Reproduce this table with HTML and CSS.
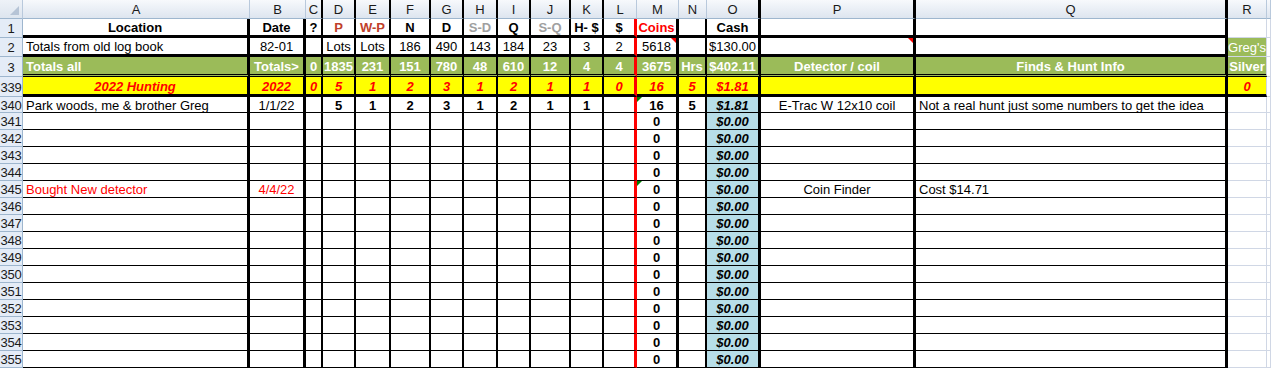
FILE: index.html
```html
<!DOCTYPE html>
<html>
<head>
<meta charset="utf-8">
<title>Hunt log</title>
<link rel="stylesheet" href="styles.css">
</head>
<body>
<div class="sheet">
  <div class="row colhead"><div class="corner"></div><div>A</div><div>B</div><div>C</div><div>D</div><div>E</div><div>F</div><div>G</div><div>H</div><div>I</div><div>J</div><div>K</div><div>L</div><div>M</div><div>N</div><div>O</div><div>P</div><div>Q</div><div>R</div><div></div></div>

  <div class="row r1"><div class="rh">1</div><div class="b">Location</div><div class="b">Date</div><div class="b">?</div><div class="b brown">P</div><div class="b brown">W-P</div><div class="b">N</div><div class="b">D</div><div class="b grey">S-D</div><div class="b">Q</div><div class="b grey">S-Q</div><div class="b">H- $</div><div class="b">$</div><div class="b red">Coins</div><div></div><div class="b">Cash</div><div></div><div></div><div class="rtop"></div><div></div></div>

  <div class="row r2"><div class="rh">2</div><div class="l">Totals from old log book</div><div>82-01</div><div></div><div>Lots</div><div>Lots</div><div>186</div><div>490</div><div>143</div><div>184</div><div>23</div><div>3</div><div>2</div><div class="cm">5618</div><div></div><div>$130.00</div><div class="cm"></div><div></div><div class="rgreen">Greg's</div><div></div></div>

  <div class="row r3"><div class="rh">3</div><div class="l">Totals all</div><div>Totals&gt;</div><div>0</div><div>1835</div><div>231</div><div>151</div><div>780</div><div class="gray">48</div><div>610</div><div class="gray">12</div><div class="gray">4</div><div>4</div><div>3675</div><div>Hrs</div><div>$402.11</div><div>Detector / coil</div><div>Finds &amp; Hunt Info</div><div>Silver</div><div></div></div>

  <div class="row r339"><div class="rh">339</div><div>2022 Hunting</div><div>2022</div><div>0</div><div>5</div><div>1</div><div>2</div><div>3</div><div class="gray">1</div><div>2</div><div class="gray">1</div><div class="gray">1</div><div>0</div><div>16</div><div>5</div><div>$1.81</div><div></div><div></div><div class="rbox">0</div><div></div></div>

  <div class="row r340"><div class="rh">340</div><div class="l">Park woods, me &amp; brother Greg</div><div>1/1/22</div><div></div><div class="b">5</div><div class="b">1</div><div class="b">2</div><div class="b">3</div><div class="b">1</div><div class="b">2</div><div class="b">1</div><div class="b">1</div><div></div><div class="b gm">16</div><div class="b">5</div><div class="b i blue">$1.81</div><div>E-Trac W 12x10 coil</div><div class="l">Not a real hunt just some numbers to get the idea</div><div></div><div></div></div>

  <div class="row"><div class="rh">341</div><div></div><div></div><div></div><div></div><div></div><div></div><div></div><div></div><div></div><div></div><div></div><div></div><div class="b">0</div><div></div><div class="b i blue">$0.00</div><div></div><div></div><div></div><div></div></div>
  <div class="row"><div class="rh">342</div><div></div><div></div><div></div><div></div><div></div><div></div><div></div><div></div><div></div><div></div><div></div><div></div><div class="b">0</div><div></div><div class="b i blue">$0.00</div><div></div><div></div><div></div><div></div></div>
  <div class="row"><div class="rh">343</div><div></div><div></div><div></div><div></div><div></div><div></div><div></div><div></div><div></div><div></div><div></div><div></div><div class="b">0</div><div></div><div class="b i blue">$0.00</div><div></div><div></div><div></div><div></div></div>
  <div class="row"><div class="rh">344</div><div></div><div></div><div></div><div></div><div></div><div></div><div></div><div></div><div></div><div></div><div></div><div></div><div class="b">0</div><div></div><div class="b i blue">$0.00</div><div></div><div></div><div></div><div></div></div>
  <div class="row"><div class="rh">345</div><div class="l red">Bought New detector</div><div class="red">4/4/22</div><div></div><div></div><div></div><div></div><div></div><div></div><div></div><div></div><div></div><div></div><div class="b gm">0</div><div></div><div class="b i blue">$0.00</div><div>Coin Finder</div><div class="l">Cost $14.71</div><div></div><div></div></div>
  <div class="row"><div class="rh">346</div><div></div><div></div><div></div><div></div><div></div><div></div><div></div><div></div><div></div><div></div><div></div><div></div><div class="b">0</div><div></div><div class="b i blue">$0.00</div><div></div><div></div><div></div><div></div></div>
  <div class="row"><div class="rh">347</div><div></div><div></div><div></div><div></div><div></div><div></div><div></div><div></div><div></div><div></div><div></div><div></div><div class="b">0</div><div></div><div class="b i blue">$0.00</div><div></div><div></div><div></div><div></div></div>
  <div class="row"><div class="rh">348</div><div></div><div></div><div></div><div></div><div></div><div></div><div></div><div></div><div></div><div></div><div></div><div></div><div class="b">0</div><div></div><div class="b i blue">$0.00</div><div></div><div></div><div></div><div></div></div>
  <div class="row"><div class="rh">349</div><div></div><div></div><div></div><div></div><div></div><div></div><div></div><div></div><div></div><div></div><div></div><div></div><div class="b">0</div><div></div><div class="b i blue">$0.00</div><div></div><div></div><div></div><div></div></div>
  <div class="row"><div class="rh">350</div><div></div><div></div><div></div><div></div><div></div><div></div><div></div><div></div><div></div><div></div><div></div><div></div><div class="b">0</div><div></div><div class="b i blue">$0.00</div><div></div><div></div><div></div><div></div></div>
  <div class="row"><div class="rh">351</div><div></div><div></div><div></div><div></div><div></div><div></div><div></div><div></div><div></div><div></div><div></div><div></div><div class="b">0</div><div></div><div class="b i blue">$0.00</div><div></div><div></div><div></div><div></div></div>
  <div class="row"><div class="rh">352</div><div></div><div></div><div></div><div></div><div></div><div></div><div></div><div></div><div></div><div></div><div></div><div></div><div class="b">0</div><div></div><div class="b i blue">$0.00</div><div></div><div></div><div></div><div></div></div>
  <div class="row"><div class="rh">353</div><div></div><div></div><div></div><div></div><div></div><div></div><div></div><div></div><div></div><div></div><div></div><div></div><div class="b">0</div><div></div><div class="b i blue">$0.00</div><div></div><div></div><div></div><div></div></div>
  <div class="row"><div class="rh">354</div><div></div><div></div><div></div><div></div><div></div><div></div><div></div><div></div><div></div><div></div><div></div><div></div><div class="b">0</div><div></div><div class="b i blue">$0.00</div><div></div><div></div><div></div><div></div></div>
  <div class="row"><div class="rh">355</div><div></div><div></div><div></div><div></div><div></div><div></div><div></div><div></div><div></div><div></div><div></div><div></div><div class="b">0</div><div></div><div class="b i blue">$0.00</div><div></div><div></div><div></div><div></div></div>
</div>
</body>
</html>
```

FILE: styles.css
```css
* { box-sizing: border-box; }

body {
  margin: 0;
  background: #ffffff;
  font-family: "Liberation Sans", Arial, sans-serif;
  font-size: 13px;
  color: #000;
}

.sheet {
  width: 1271px;
  overflow: hidden;
}

.row {
  display: grid;
  grid-template-columns: 23px 227px 56px 17px 33px 35px 40px 33px 34px 33px 40px 33px 33px 42px 28px 54px 155px 312px 39px 1fr;
  height: 17px;
}

.row > div {
  display: flex;
  align-items: center;
  justify-content: center;
  white-space: nowrap;
  overflow: hidden;
  position: relative;
  border-bottom: 1px solid #000;
  padding-top: 1px;
}

/* vertical borders per column */
.row > div:nth-child(2),
.row > div:nth-child(3) { border-right: 3px solid #000; }
.row > div:nth-child(n+4):nth-child(-n+12) { border-right: 2px solid #000; }
.row > div:nth-child(13) { border-right: 3px solid #ff0000; }
.row > div:nth-child(14) { border-right: 3px solid #000; }
.row > div:nth-child(15) { border-right: 2px solid #000; }
.row > div:nth-child(n+16):nth-child(-n+18) { border-right: 3px solid #000; }
.row > div:nth-child(n+19) { border-right: 1px solid #d0d7e5; border-bottom-color: #d0d7e5; }

/* row headers */
.row > .rh {
  background: #e4ecf7;
  border-right: 1px solid #9eb6ce;
  border-bottom: 1px solid #9eb6ce;
  color: #1a1a1a;
  justify-content: center;
  padding: 1px 0 0 0;
  letter-spacing: -0.2px;
}

/* column header row */
.colhead { height: 19px; }
.colhead > div {
  background: linear-gradient(#f7f9fc 0%, #e9eef5 55%, #dde5ef 100%);
  color: #1a1a1a;
}
.row.colhead > div {
  border-right: 1px solid #b9c9dc;
  border-bottom: 1px solid #9eb6ce;
}
.colhead > .corner {
  background: linear-gradient(#eef2f8, #dde5ef);
}
.colhead > .corner::after {
  content: "";
  position: absolute;
  right: 3px;
  bottom: 3px;
  border-style: solid;
  border-width: 0 0 9px 9px;
  border-color: transparent transparent #b6c4d6 transparent;
}

/* special rows */
.r1, .r2 { height: 19px; }
.r1 > div:nth-child(n+2):nth-child(-n+18),
.r2 > div:nth-child(n+2):nth-child(-n+18) { border-bottom: 3px solid #000; }
.row > .rtop { border-bottom-color: #9bbb59; }
.row > .rgreen {
  background: #9bbb59;
  color: #fff;
  border-bottom-color: #9bbb59;
  border-right-color: #9bbb59;
}

.r3 { height: 20px; }
.r3 > div:nth-child(n+2):nth-child(-n+19) {
  background: #9bbb59;
  color: #fff;
  font-weight: bold;
  border-bottom: 3px double #000;
}
.r3 > .gray { background: #c0c0c0; color: #000; }

.r339 { height: 20px; }
.r339 > div:nth-child(n+2):nth-child(-n+19) {
  background: #ffff00;
  color: #ff0000;
  font-weight: bold;
  font-style: italic;
  border-bottom: 3px solid #000;
}
.r339 > .gray { background: #c0c0c0; color: #000; }
.r339 > .rbox { border-right: 3px solid #000; }

.r340 { height: 16px; }

/* cell helpers */
.row > .l { justify-content: flex-start; padding-left: 3px; }
.b { font-weight: bold; }
.i { font-style: italic; }
.red { color: #ff0000; }
.brown { color: #c0402a; }
.grey { color: #a0a0a0; }
.blue { background: #b7dee8; }

/* comment / error indicators */
.cm::after {
  content: "";
  position: absolute;
  top: 0;
  right: 0;
  border-style: solid;
  border-width: 0 5px 5px 0;
  border-color: transparent #ff0000 transparent transparent;
}
.gm::before {
  content: "";
  position: absolute;
  top: 0;
  left: 0;
  border-style: solid;
  border-width: 5px 5px 0 0;
  border-color: #008000 transparent transparent transparent;
}
```
